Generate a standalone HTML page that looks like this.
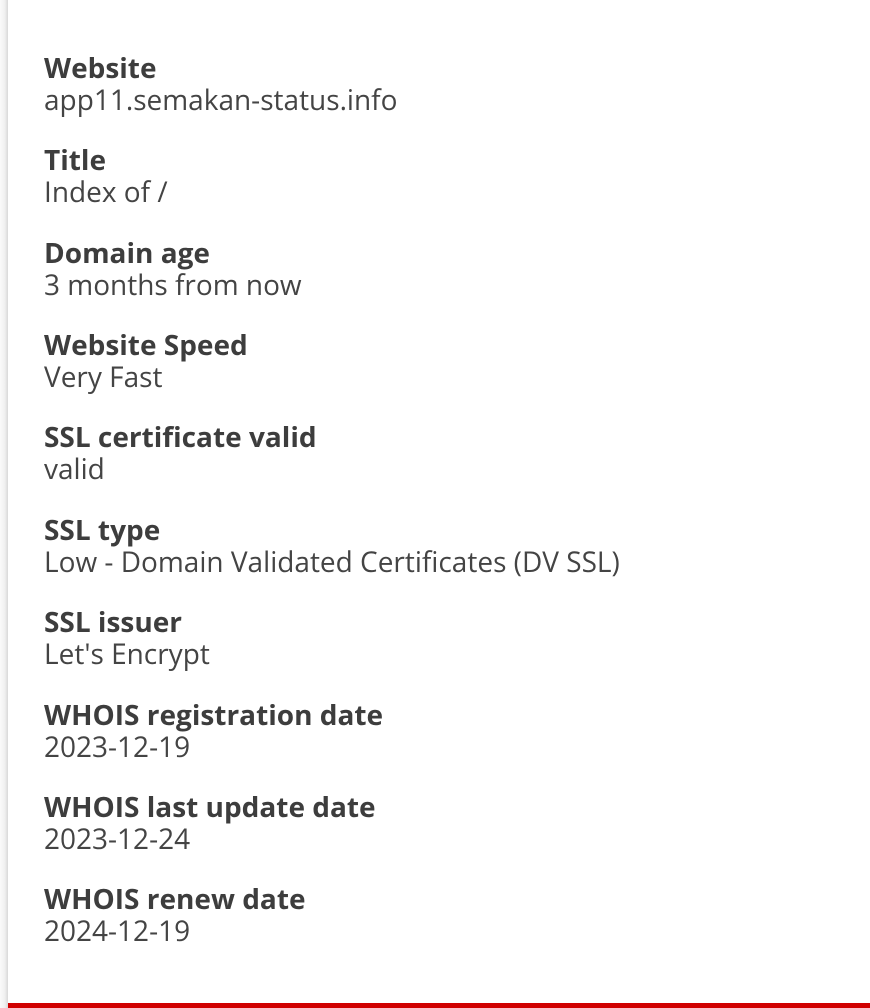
<!DOCTYPE html>
<html><head><style>
html,body{margin:0;padding:0;width:870px;height:1008px;overflow:hidden;background:#fff;}
.strip{position:absolute;left:0;top:0;width:8px;height:1008px;background:linear-gradient(to right,#fafafa,#f0f0f0 60%,#d8d8d8);}
.red{position:absolute;left:8px;right:0;top:1003px;height:5px;background:#d00000;}
.b{position:absolute;left:44px;font-family:"Open Sans","Liberation Sans",sans-serif;font-size:28px;line-height:32px;color:#444;white-space:nowrap;}
.b b{display:block;font-weight:bold;color:#3d3d3d;}
.b span{display:block;}
</style></head><body>
<div class="strip"></div>
<div class="b" style="top:52px"><b>Website</b><span>app11.semakan-status.info</span></div>
<div class="b" style="top:144px"><b>Title</b><span>Index of /</span></div>
<div class="b" style="top:237px"><b>Domain age</b><span>3 months from now</span></div>
<div class="b" style="top:329px"><b>Website Speed</b><span>Very Fast</span></div>
<div class="b" style="top:421px"><b>SSL certificate valid</b><span>valid</span></div>
<div class="b" style="top:514px"><b>SSL type</b><span>Low - Domain Validated Certificates (DV SSL)</span></div>
<div class="b" style="top:606px"><b>SSL issuer</b><span>Let's Encrypt</span></div>
<div class="b" style="top:699px"><b>WHOIS registration date</b><span>2023-12-19</span></div>
<div class="b" style="top:791px"><b>WHOIS last update date</b><span>2023-12-24</span></div>
<div class="b" style="top:883px"><b>WHOIS renew date</b><span>2024-12-19</span></div>
<div class="red"></div>
</body></html>
